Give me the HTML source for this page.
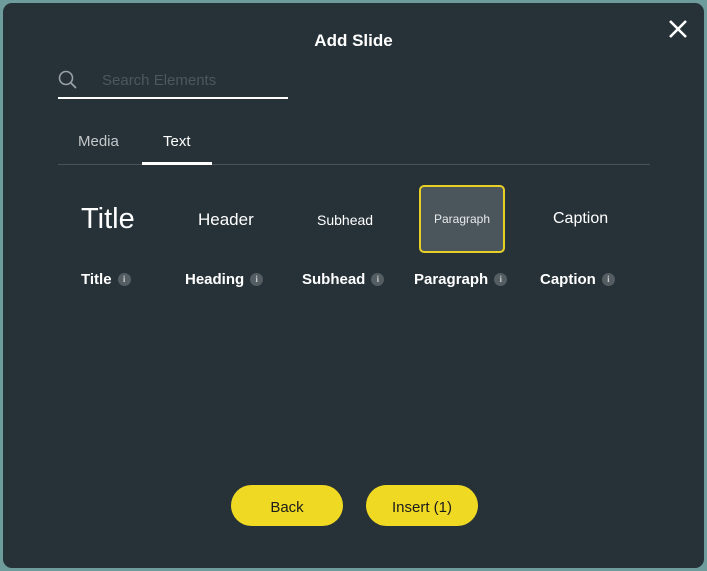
<!DOCTYPE html>
<html><head><style>
body{margin:0;width:707px;height:571px;background:#6e9c9c;font-family:"Liberation Sans",sans-serif;overflow:hidden;position:relative}
.m{position:absolute;left:3px;top:3px;width:701px;height:565px;background:#263238;border-radius:9px}
.a{position:absolute;white-space:nowrap}
.i{display:inline-block;width:13px;height:13px;border-radius:50%;background:#535d62;color:#c7cbcd;font-size:9px;line-height:13px;text-align:center;font-weight:bold;vertical-align:2px;margin-left:6px;font-family:"Liberation Serif",serif}
.lab{font-weight:bold;font-size:15px;color:#fff;top:271px}
.btn{position:absolute;top:485px;width:112px;height:41px;border-radius:21px;background:#efd923;color:#1c1c1c;font-size:15px;text-align:center;line-height:45px}
</style></head><body>
<div class="m"></div>
<div class="a" style="left:0;width:707px;text-align:center;top:31px;color:#fff;font-weight:bold;font-size:17px">Add Slide</div>
<svg class="a" style="left:666px;top:17px" width="24" height="24" viewBox="0 0 24 24"><path d="M4 4L20 20M20 4L4 20" stroke="#fff" stroke-width="2.6"/></svg>
<svg class="a" style="left:56px;top:68px" width="24" height="24" viewBox="0 0 24 24"><circle cx="10" cy="10" r="6.5" stroke="#9aa1a5" stroke-width="1.6" fill="none"/><path d="M15 15L20 20" stroke="#9aa1a5" stroke-width="1.8"/></svg>
<div class="a" style="left:102px;top:72px;color:#4d575c;font-size:15px">Search Elements</div>
<div class="a" style="left:58px;top:97px;width:230px;height:2px;background:#fff"></div>
<div class="a" style="left:78px;top:133px;color:#c4c8ca;font-size:15px">Media</div>
<div class="a" style="left:163px;top:133px;color:#fff;font-size:15px">Text</div>
<div class="a" style="left:58px;top:164px;width:592px;height:1px;background:#4a5257"></div>
<div class="a" style="left:142px;top:162px;width:70px;height:3px;background:#fff"></div>
<div class="a" style="left:81px;top:203px;color:#fff;font-size:29px">Title</div>
<div class="a" style="left:198px;top:210px;color:#fff;font-size:17px">Header</div>
<div class="a" style="left:317px;top:212px;color:#fff;font-size:14px">Subhead</div>
<div class="a" style="left:419px;top:185px;width:82px;height:64px;border:2px solid #e7cf26;border-radius:5px;background:#4b565c"></div>
<div class="a" style="left:419px;top:212px;width:86px;text-align:center;color:#e8eaeb;font-size:12px">Paragraph</div>
<div class="a" style="left:553px;top:210px;color:#fff;font-size:16px">Caption</div>
<div class="a lab" style="left:81px">Title<span class="i">i</span></div>
<div class="a lab" style="left:185px">Heading<span class="i">i</span></div>
<div class="a lab" style="left:302px">Subhead<span class="i">i</span></div>
<div class="a lab" style="left:414px">Paragraph<span class="i">i</span></div>
<div class="a lab" style="left:540px">Caption<span class="i">i</span></div>
<div class="btn" style="left:231px">Back</div>
<div class="btn" style="left:366px">Insert (1)</div>
</body></html>
